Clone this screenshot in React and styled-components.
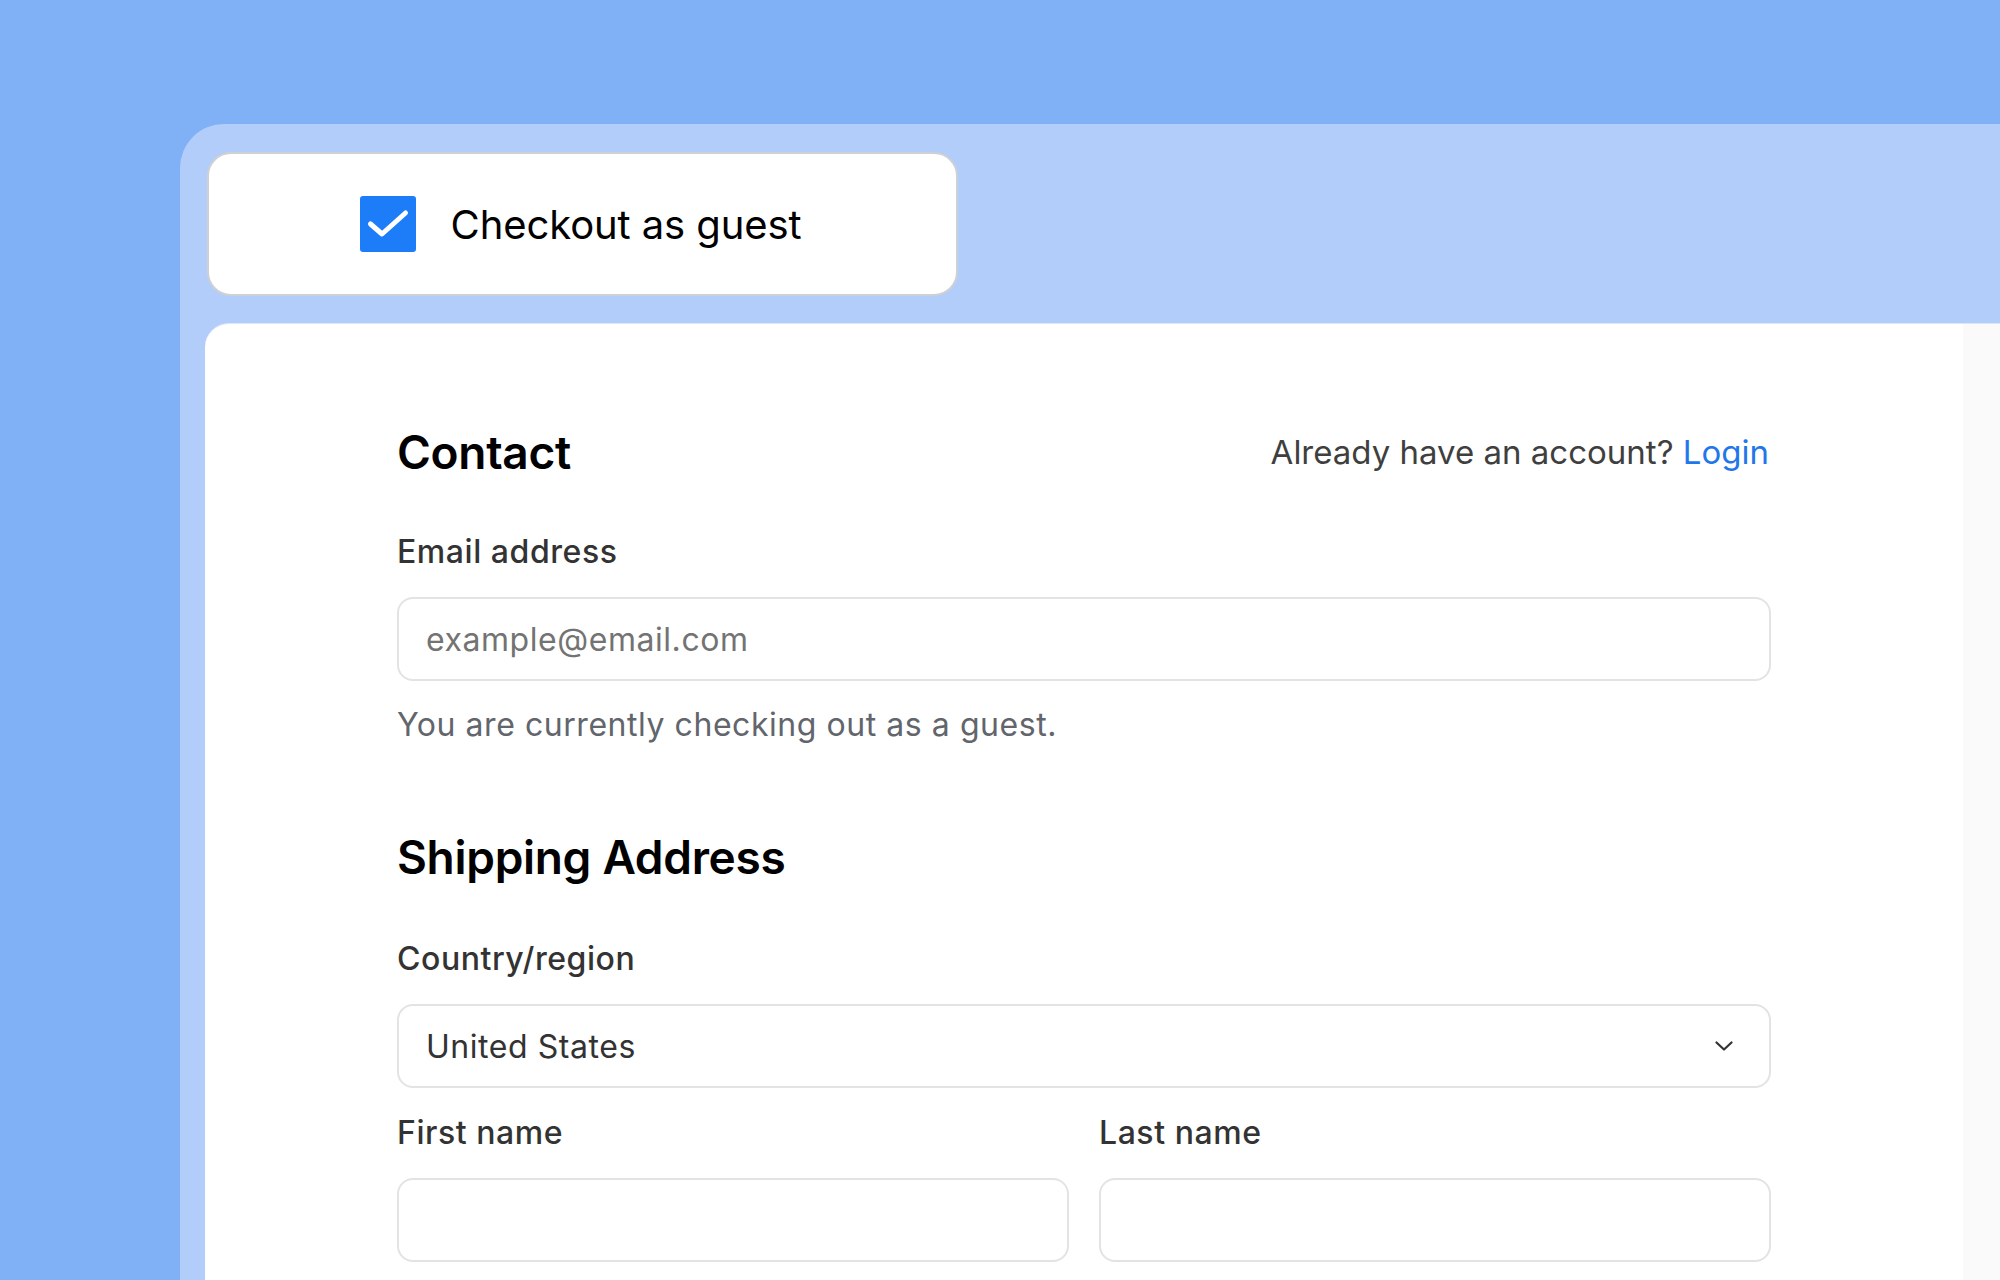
import React from "react";
import styled, { createGlobalStyle } from "styled-components";

const GlobalStyle = createGlobalStyle`
  html, body {
    margin: 0;
    padding: 0;
    width: 2000px;
    height: 1280px;
    overflow: hidden;
    background: #80b0f6;
    font-family: Inter, "Noto Sans", "Liberation Sans", sans-serif;
  }
  * { box-sizing: border-box; }
`;

const Page = styled.div`
  width: 2000px;
  height: 1280px;
  padding: 124px 0 0 180px;
`;

const Panel = styled.div`
  height: 1156px;
  background: #b2cdf9;
  border-top-left-radius: 44px;
  padding: 28px 0 0 25px;
  display: flex;
  flex-direction: column;
  gap: 27px;
  overflow: hidden;
`;

const GuestCard = styled.label`
  width: 751px;
  height: 144px;
  margin-left: 2px;
  flex: none;
  background: #fff;
  border: 2px solid #cdd0d5;
  border-radius: 24px;
  display: flex;
  align-items: center;
  justify-content: center;
  gap: 35px;
  padding-right: 4px;
`;

const Box = styled.span`
  width: 56px;
  height: 56px;
  border-radius: 3px;
  background: #1d7cf7;
  display: flex;
  align-items: center;
  justify-content: center;
`;

const GuestText = styled.span`
  font-size: 40px;
  font-weight: 400;
  color: #000;
  letter-spacing: -0.1px;
`;

const MainCard = styled.div`
  flex: 1;
  display: grid;
  grid-template-columns: 1758px 1fr;
  background: #fff;
  border-top: 1px solid #d9e6fc;
  border-top-left-radius: 24px;
  overflow: hidden;
`;

const Side = styled.div`
  background: #fafafa;
`;

const Form = styled.div`
  padding: 100px 0 0 192px;
  width: 1566px;
  display: flex;
  flex-direction: column;
`;

const HeaderRow = styled.div`
  display: flex;
  align-items: center;
  justify-content: space-between;
  margin-top: ${(p) => p.$top || 0}px;
`;

const Heading = styled.h2`
  margin: 0;
  font-size: 46px;
  line-height: 56px;
  font-weight: 600;
  color: #000;
  letter-spacing: -0.3px;
`;

const AccountNote = styled.div`
  font-size: 33px;
  line-height: 40px;
  color: #3f3f3f;
  padding-right: 2px;
`;

const LoginLink = styled.a`
  color: #1f77e9;
  text-decoration: none;
`;

const Label = styled.div`
  font-size: 32px;
  line-height: 40px;
  font-weight: 500;
  letter-spacing: 0.55px;
  color: #333;
  margin-top: ${(p) => p.$top}px;
  margin-bottom: 25px;
`;

const Field = styled.div`
  height: 84px;
  border: 2px solid #e3e3e3;
  border-radius: 16px;
  display: flex;
  align-items: center;
  justify-content: space-between;
  padding: 0 36px 0 27px;
  font-size: 32px;
  letter-spacing: 0.55px;
  color: ${(p) => (p.$placeholder ? "#737373" : "#333")};
`;

const Help = styled.div`
  font-size: 32px;
  line-height: 40px;
  letter-spacing: 0.55px;
  color: #62656c;
  margin-top: 24px;
`;

const Row = styled.div`
  display: grid;
  grid-template-columns: 1fr 1fr;
  column-gap: 30px;
`;

const Column = styled.div`
  display: flex;
  flex-direction: column;
`;

const Chevron = () => (
  <svg width="18" height="10" viewBox="0 0 18 10" fill="none">
    <path
      d="M1.5 1.5L9 8.5l7.5-7"
      stroke="#333"
      strokeWidth="2.2"
      strokeLinecap="round"
      strokeLinejoin="round"
    />
  </svg>
);

export default function App() {
  return (
    <>
      <GlobalStyle />
      <Page>
        <Panel>
          <GuestCard>
            <Box>
              <svg width="56" height="56" viewBox="0 0 56 56" fill="none">
                <path
                  d="M10.5 28l11.5 10L45.5 17"
                  stroke="#fff"
                  strokeWidth="5"
                  strokeLinecap="round"
                  strokeLinejoin="round"
                />
              </svg>
            </Box>
            <GuestText>Checkout as guest</GuestText>
          </GuestCard>
          <MainCard>
            <Form>
              <HeaderRow>
                <Heading>Contact</Heading>
                <AccountNote>
                  Already have an account? <LoginLink href="#">Login</LoginLink>
                </AccountNote>
              </HeaderRow>
              <Label $top={52}>Email address</Label>
              <Field $placeholder>example@email.com</Field>
              <Help>You are currently checking out as a guest.</Help>

              <HeaderRow $top={84}>
                <Heading>Shipping Address</Heading>
              </HeaderRow>
              <Label $top={54}>Country/region</Label>
              <Field>
                United States
                <Chevron />
              </Field>
              <Row>
                <Column>
                  <Label $top={25}>First name</Label>
                  <Field />
                </Column>
                <Column>
                  <Label $top={25}>Last name</Label>
                  <Field />
                </Column>
              </Row>
            </Form>
            <Side />
          </MainCard>
        </Panel>
      </Page>
    </>
  );
}
